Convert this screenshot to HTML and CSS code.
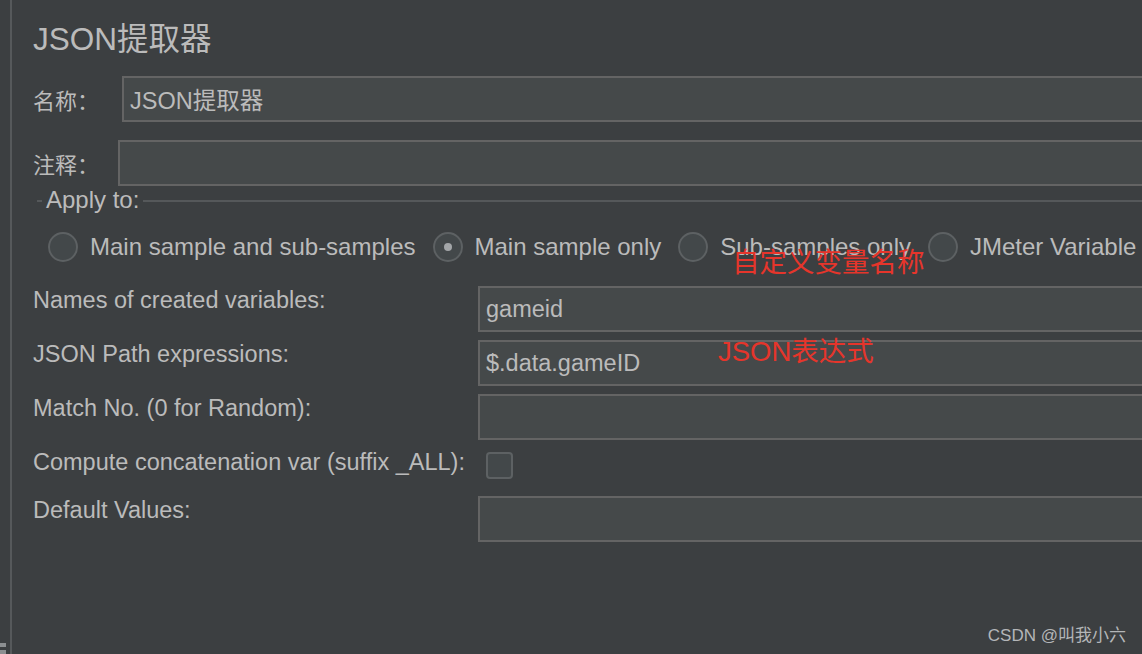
FILE: index.html
```html
<!DOCTYPE html>
<html lang="zh-CN">
<head>
  <meta charset="UTF-8" />
  <title>JSON提取器</title>
  <link rel="stylesheet" href="styles.css">
</head>
<body>

<div class="frame">
  <div class="gutter">
    <span class="grip"></span>
    <span class="grip"></span>
  </div>

  <main class="panel">
    <h1 class="title">JSON提取器</h1>

    <div class="row row-name">
      <label class="cn-label">名称：</label>
      <input class="field" type="text" value="JSON提取器" />
    </div>

    <div class="row row-comment">
      <label class="cn-label">注释：</label>
      <input class="field" type="text" />
    </div>

    <div class="group">
      <div class="group-head">
        <span class="rule rule-short"></span>
        <span class="group-title">Apply to:</span>
        <span class="rule"></span>
      </div>
      <div class="radios">
        <span class="radio"></span><span class="radio-text">Main sample and sub-samples</span>
        <span class="radio checked"></span><span class="radio-text">Main sample only</span>
        <span class="radio"></span><span class="radio-text">Sub-samples only</span>
        <span class="radio"></span><span class="radio-text">JMeter Variable</span>
      </div>
    </div>

    <div class="form">
      <label>Names of created variables:</label>
      <input class="field" type="text" value="gameid" />

      <label>JSON Path expressions:</label>
      <input class="field" type="text" value="$.data.gameID" />

      <label>Match No. (0 for Random):</label>
      <input class="field" type="text" />

      <label>Compute concatenation var (suffix _ALL):</label>
      <div class="check-cell"><span class="checkbox"></span></div>

      <label>Default Values:</label>
      <input class="field" type="text" />
    </div>
  </main>
</div>

<!-- red notes drawn over the form -->
<span class="note note-var">自定义变量名称</span>
<span class="note note-path">JSON表达式</span>

<span class="mark">CSDN @叫我小六</span>

</body>
</html>
```

FILE: styles.css
```css
html, body {
  margin: 0;
  height: 100%;
}
body {
  background: #3c3f41;
  color: #bbbbbb;
  font-family: "Liberation Sans", "Noto Sans CJK SC", sans-serif;
  font-size: 23.5px;
  overflow: hidden;
  position: relative;
}
.frame {
  display: flex;
  height: 654px;
}
.gutter {
  width: 10px;
  border-right: 2px solid #56595b;
  display: flex;
  flex-direction: column;
  justify-content: flex-end;
  gap: 3px;
}
.grip {
  display: block;
  width: 6px;
  height: 4px;
  background: #8c8f91;
}
.panel {
  flex: 1;
  padding-left: 21px;
  min-width: 0;
}
.title {
  margin: 19px 0 0;
  font-size: 31.5px;
  font-weight: normal;
  line-height: 40px;
  color: #bbbbbb;
}
.row {
  display: flex;
  align-items: center;
}
.row-name {
  margin-top: 17px;
}
.row-comment {
  margin-top: 18px;
}
.cn-label {
  font-size: 22px;
}
.row-name .cn-label {
  width: 89px;
}
.row-comment .cn-label {
  width: 85px;
}
.field {
  flex: 1;
  height: 46px;
  box-sizing: border-box;
  background: #45494a;
  border: 2px solid #646464;
  border-right: none;
  color: #bbbbbb;
  font-family: "Liberation Sans", "Noto Sans CJK SC", sans-serif;
  font-size: 23.5px;
  padding: 0 6px;
  margin-right: -10px;
  outline: none;
}

/* Apply to: titled border */
.group {
  margin-top: 2px;
}
.group-head {
  display: flex;
  align-items: center;
  height: 24px;
  margin-left: 4px;
  font-size: 24px;
}
.rule {
  flex: 1;
  height: 2px;
  background: #55585a;
  margin-top: 2px;
}
.rule-short {
  flex: none;
  width: 5px;
  margin-right: 4px;
}
.group-title {
  margin-right: 4px;
}
.radios {
  display: flex;
  align-items: center;
  margin-top: 19px;
  margin-left: 15px;
  height: 32px;
  font-size: 24px;
}
.radio {
  width: 30px;
  height: 30px;
  box-sizing: border-box;
  border-radius: 50%;
  border: 2px solid #5d6163;
  background: #43484a;
  position: relative;
  flex: none;
}
.radio.checked::after {
  content: "";
  position: absolute;
  left: 9px;
  top: 9px;
  width: 8px;
  height: 8px;
  border-radius: 50%;
  background: #a3a6a8;
}
.radio-text {
  margin-left: 12px;
  margin-right: 17px;
  white-space: nowrap;
}

/* label / field grid */
.form {
  display: grid;
  grid-template-columns: 445px 1fr;
  row-gap: 8px;
  margin-top: 23px;
  align-items: start;
}
.form label {
  line-height: 28px;
  white-space: nowrap;
}
.check-cell {
  height: 40px;
}
.checkbox {
  display: block;
  width: 27px;
  height: 27px;
  box-sizing: border-box;
  margin: 4px 0 0 8px;
  border: 2px solid #5d6163;
  border-radius: 4px;
  background: #43484a;
}

.note {
  position: absolute;
  color: #e6352b;
  font-family: "Liberation Sans", "Noto Sans CJK SC", sans-serif;
  font-size: 27.5px;
  line-height: 32px;
  white-space: nowrap;
}
.note-var {
  left: 732px;
  top: 247px;
}
.note-path {
  left: 718px;
  top: 336px;
}
.mark {
  position: absolute;
  right: 16px;
  bottom: 8px;
  font-family: "Liberation Sans", "Noto Sans CJK SC", sans-serif;
  font-size: 17px;
  color: #b4b6b8;
}
```
